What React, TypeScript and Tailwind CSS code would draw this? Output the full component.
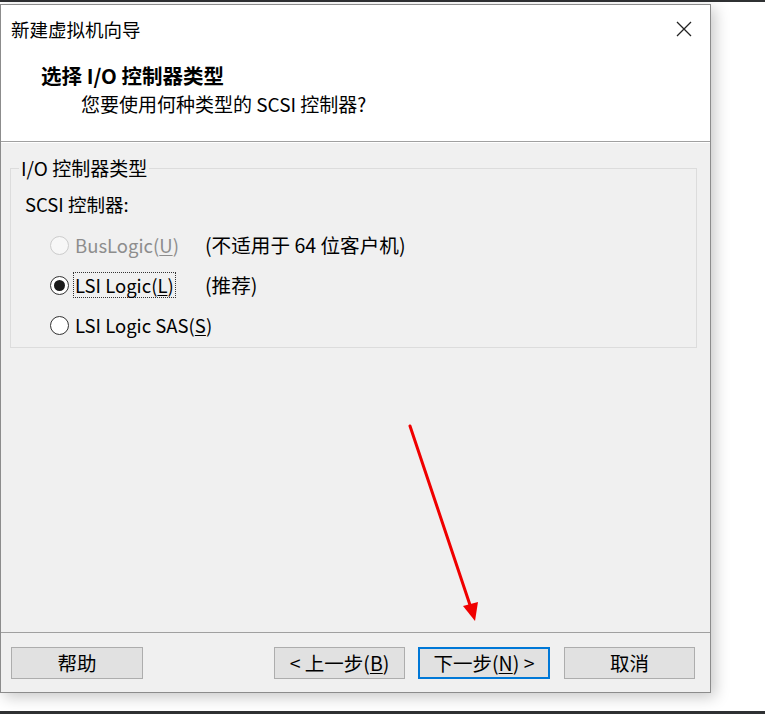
import React from "react";

const font = { fontFamily: '"Noto Sans CJK SC", "Noto Sans", sans-serif' };

function Radio({ state }: { state: "disabled" | "checked" | "unchecked" }) {
  if (state === "disabled") {
    return <span className="inline-block w-[19px] h-[19px] rounded-full border border-[#cccccc] bg-[#f7f7f7] shrink-0" />;
  }
  return (
    <span className="w-[19px] h-[19px] rounded-full border border-[#333333] bg-white shrink-0 flex items-center justify-center">
      {state === "checked" && <span className="w-[11px] h-[11px] rounded-full bg-[#1a1a1a]" />}
    </span>
  );
}

function Btn({ children, primary }: { children: React.ReactNode; primary?: boolean }) {
  return (
    <div
      className={
        "h-[32px] flex items-center justify-center bg-[#e1e1e1] text-[19.5px] text-black " +
        (primary ? "border-2 border-[#0078d7]" : "border border-[#adadad]")
      }
    >
      {children}
    </div>
  );
}

export default function App() {
  return (
    <div className="w-[765px] h-[714px] bg-white relative overflow-hidden flex flex-col" style={font}>
      <div className="h-[2px] bg-[#2f3133] shrink-0" />
      <div className="h-[2px] shrink-0" />
      <div className="w-[711px] h-[689px] shrink-0 border border-[#8c8c8c] flex flex-col shadow-[4px_4px_14px_rgba(0,0,0,0.22)] bg-[#f0f0f0] text-black">
        {/* header */}
        <div className="bg-white h-[137px] shrink-0 border-b border-[#a0a0a0] relative">
          <div className="h-[48px] flex items-center pl-[10px] text-[18.5px] leading-[24px]">新建虚拟机向导</div>
          <div className="absolute left-[671px] top-[12px] w-[24px] h-[24px] flex items-center justify-center">
            <svg width="16" height="16" viewBox="0 0 16 16">
              <path d="M1 1 L15 15 M15 1 L1 15" stroke="#222" strokeWidth="1.3" fill="none" />
            </svg>
          </div>
          <div className="mt-[10px] pl-[40px] text-[20.5px] leading-[24px] font-bold">选择 I/O 控制器类型</div>
          <div className="mt-[5px] pl-[80px] text-[19px] leading-[24px]">您要使用何种类型的 SCSI 控制器?</div>
        </div>
        <div className="h-px bg-white shrink-0" />
        {/* body */}
        <div className="flex-1 relative">
          <div className="mt-[25px] ml-[9px] w-[687px] h-[180px] border border-[#dcdcdc] relative">
            <div className="absolute -top-[13px] left-[8px] px-[2px] bg-[#f0f0f0] text-[19px] leading-[24px]">I/O 控制器类型</div>
            <div className="pt-[23px] pl-[14px] text-[18.5px] leading-[24px]">SCSI 控制器:</div>
            <div className="mt-[9px] pl-[39px] flex flex-col text-[18.5px]">
              <div className="h-[40px] flex items-center">
                <div className="w-[155px] flex items-center">
                  <Radio state="disabled" />
                  <span className="ml-[4px] px-[1px] border border-transparent text-[#8d8d8d] leading-[24px]">
                    BusLogic(<u className="underline-offset-2">U</u>)
                  </span>
                </div>
                <span className="leading-[24px] text-[19.6px]">(不适用于 64 位客户机)</span>
              </div>
              <div className="h-[40px] flex items-center">
                <div className="w-[155px] flex items-center">
                  <Radio state="checked" />
                  <span className="ml-[4px] px-[1px] border border-dotted border-[#333] leading-[24px]">
                    LSI Logic(<u className="underline-offset-2">L</u>)
                  </span>
                </div>
                <span className="leading-[24px] text-[19.6px]">(推荐)</span>
              </div>
              <div className="h-[40px] flex items-center">
                <div className="flex items-center">
                  <Radio state="unchecked" />
                  <span className="ml-[4px] px-[1px] border border-transparent leading-[24px]">
                    LSI Logic SAS(<u className="underline-offset-2">S</u>)
                  </span>
                </div>
              </div>
            </div>
          </div>
        </div>
        {/* footer */}
        <div className="h-[60px] shrink-0 border-t border-[#a0a0a0] pt-[14px] pl-[10px] pr-[15px] flex items-start">
          <div className="w-[132px]"><Btn>帮助</Btn></div>
          <div className="flex-1" />
          <div className="w-[131px]"><Btn>&lt; 上一步(<u className="underline-offset-2">B</u>)</Btn></div>
          <div className="w-[132px] ml-[13px]"><Btn primary>下一步(<u className="underline-offset-2">N</u>) &gt;</Btn></div>
          <div className="w-[131px] ml-[14px]"><Btn>取消</Btn></div>
        </div>
      </div>
      <div className="flex-1" />
      <div className="h-[3px] bg-[#2f3133] shrink-0" />
      {/* red annotation arrow */}
      <svg className="absolute left-0 top-0 pointer-events-none" width="765" height="714" viewBox="0 0 765 714">
        <line x1="410" y1="426" x2="471" y2="608" stroke="#f00000" strokeWidth="3" strokeLinecap="round" />
        <polygon points="475,621 463,606 478,602" fill="#f00000" />
      </svg>
    </div>
  );
}
